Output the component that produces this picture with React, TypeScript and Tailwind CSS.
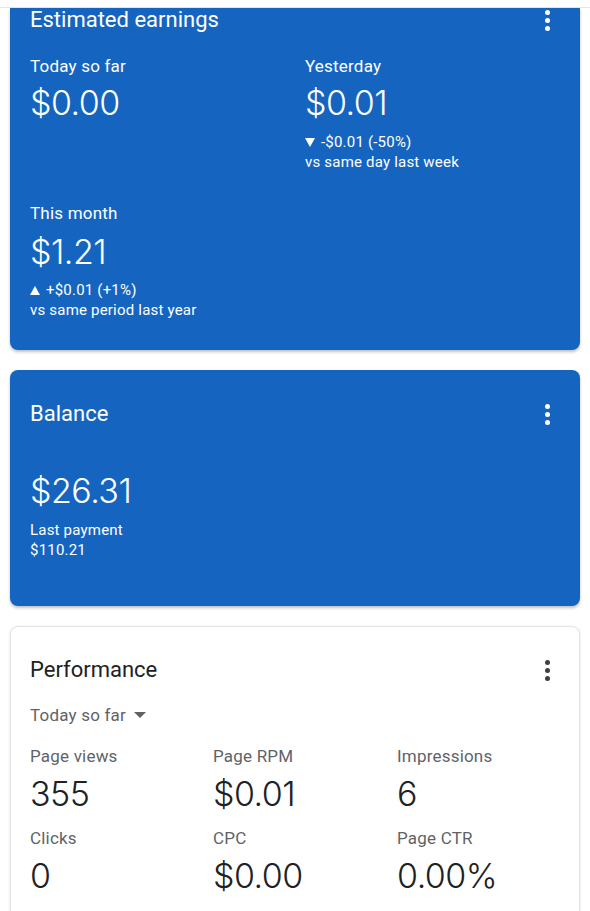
import React from "react";

const NUM = "text-[34px] leading-[40px] font-light tracking-[-0.5px] [font-family:Inter,Roboto,sans-serif]";

function Dots({ light }: { light: boolean }) {
  const c = light ? "bg-white" : "bg-[#3c4043]";
  return (
    <div className="flex flex-col items-center gap-[3px] w-[6px]">
      <span className={`block w-[5px] h-[5px] rounded-full ${c}`} />
      <span className={`block w-[5px] h-[5px] rounded-full ${c}`} />
      <span className={`block w-[5px] h-[5px] rounded-full ${c}`} />
    </div>
  );
}

function Tri({ up }: { up: boolean }) {
  return (
    <svg width="10" height="9" viewBox="0 0 10 9" className="mr-[6px] shrink-0">
      <path d={up ? "M0 9 L10 9 L5 0 Z" : "M0 0 L10 0 L5 9 Z"} fill="white" />
    </svg>
  );
}

function Metric({ label, value, mtLabel }: { label: string; value: string; mtLabel: string }) {
  return (
    <div className={`flex flex-col ${mtLabel}`}>
      <div className="text-[17px] leading-[20px] text-[#5f6368] tracking-[0.2px]">{label}</div>
      <div className={`mt-[8px] text-[#202124] ${NUM}`}>{value}</div>
    </div>
  );
}

export default function App() {
  return (
    <div
      className="w-[590px] h-[911px] bg-white overflow-hidden"
      style={{ fontFamily: "Roboto, 'Noto Sans', Arial, sans-serif" }}
    >
      <div className="h-[8px] border-b border-[#e6e6e6]" />

      {/* Estimated earnings */}
      <div className="mx-[10px] bg-[#1565c0] rounded-b-[8px] shadow-[0_2px_3px_rgba(0,0,0,0.25)] text-white pl-[20px] pr-[30px] pb-[30px]">
        <div className="flex items-center justify-between h-[24px]">
          <div className="text-[22px] leading-[24px]">Estimated earnings</div>
          <Dots light />
        </div>
        <div className="grid grid-cols-[275px_1fr] mt-[23px]">
          <div>
            <div className="text-[17px] leading-[22px] tracking-[0.2px]">Today so far</div>
            <div className={`mt-[6px] ${NUM}`}>$0.00</div>
          </div>
          <div>
            <div className="text-[17px] leading-[22px] tracking-[0.2px]">Yesterday</div>
            <div className={`mt-[6px] ${NUM}`}>$0.01</div>
            <div className="mt-[9px] flex items-center text-[15px] leading-[20px] tracking-[0.2px]">
              <Tri up={false} />
              <span>-$0.01 (-50%)</span>
            </div>
            <div className="text-[15px] leading-[20px] tracking-[0.2px]">vs same day last week</div>
          </div>
        </div>
        <div className="mt-[30px]">
          <div className="text-[17px] leading-[22px] tracking-[0.2px]">This month</div>
          <div className={`mt-[8px] ${NUM}`}>$1.21</div>
          <div className="mt-[8px] flex items-center text-[15px] leading-[20px] tracking-[0.2px]">
            <Tri up />
            <span>+$0.01 (+1%)</span>
          </div>
          <div className="text-[15px] leading-[20px] tracking-[0.2px]">vs same period last year</div>
        </div>
      </div>

      {/* Balance */}
      <div className="mx-[10px] mt-[20px] bg-[#1565c0] rounded-[8px] shadow-[0_2px_3px_rgba(0,0,0,0.25)] text-white pl-[20px] pr-[30px] pt-[32px] pb-[46px]">
        <div className="flex items-center justify-between h-[24px]">
          <div className="text-[22px] leading-[24px]">Balance</div>
          <Dots light />
        </div>
        <div className={`mt-[45px] ${NUM}`}>$26.31</div>
        <div className="mt-[9px] text-[15px] leading-[20px] tracking-[0.2px]">Last payment</div>
        <div className="text-[15px] leading-[20px] tracking-[0.2px]">$110.21</div>
      </div>

      {/* Performance */}
      <div className="mx-[10px] mt-[20px] bg-white rounded-t-[8px] border border-[#e3e3e3] shadow-[0_1px_3px_rgba(0,0,0,0.12)] pl-[19px] pr-[29px] pt-[31px] pb-[40px]">
        <div className="flex items-center justify-between h-[24px]">
          <div className="text-[22px] leading-[24px] text-[#202124]">Performance</div>
          <Dots light={false} />
        </div>
        <div className="mt-[22px] flex items-center text-[17px] leading-[22px] text-[#5f6368] tracking-[0.2px]">
          <span>Today so far</span>
          <svg width="12" height="7" viewBox="0 0 12 7" className="ml-[8px] mt-[1px]">
            <path d="M0 0 L12 0 L6 6 Z" fill="#5f6368" />
          </svg>
        </div>
        <div className="grid grid-cols-[183px_184px_1fr]">
          <Metric label="Page views" value="355" mtLabel="mt-[20px]" />
          <Metric label="Page RPM" value="$0.01" mtLabel="mt-[20px]" />
          <Metric label="Impressions" value="6" mtLabel="mt-[20px]" />
          <Metric label="Clicks" value="0" mtLabel="mt-[14px]" />
          <Metric label="CPC" value="$0.00" mtLabel="mt-[14px]" />
          <Metric label="Page CTR" value="0.00%" mtLabel="mt-[14px]" />
        </div>
      </div>
    </div>
  );
}
